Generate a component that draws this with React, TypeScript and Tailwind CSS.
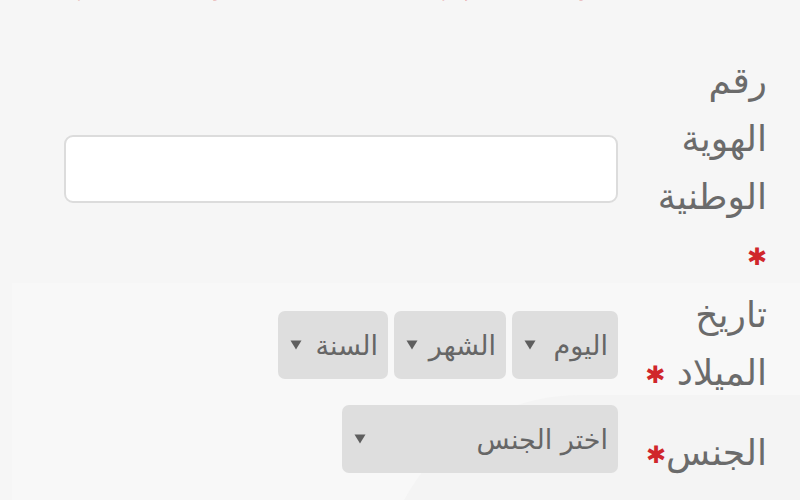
import React from "react";

const Arrow = () => (
  <svg width="12" height="10" viewBox="0 0 12 10" className="shrink-0">
    <path d="M0.5 0.5 H11.5 L6 9.5 Z" fill="#5e5e5e" />
  </svg>
);

const Star = () => (
  <span className="text-[#d0262b] text-[24px] align-middle">✱</span>
);

function Select({ label, w }: { label: string; w: string }) {
  return (
    <div
      className={`${w} h-[68px] rounded-[7px] bg-[#dedede] flex items-center justify-between pr-[10px] pl-[12px] text-[27px] text-[#666666]`}
    >
      <span className="leading-none">{label}</span>
      <Arrow />
    </div>
  );
}

export default function App() {
  return (
    <div
      dir="rtl"
      className="relative w-[800px] h-[500px] overflow-hidden bg-[#f6f6f6]"
      style={{ fontFamily: '"DejaVu Sans", "Noto Sans", sans-serif' }}
    >
      <div className="absolute left-[12px] right-0 top-[283px] bottom-0 bg-[#f8f8f8]" />
      <div className="absolute left-[380px] top-[395px] w-[700px] h-[400px] rounded-full bg-[#f4f4f4]" />

      <div className="relative">
        <div className="h-[10px] overflow-hidden">
          <p className="-mt-[33px] pr-[100px] pl-[235px] text-[26px] leading-[36px] text-[#d0262b] whitespace-nowrap">
            جميع الحقول المشار إليها بعلامة النجمة مطلوبة يجب تعبئتها
          </p>
        </div>

        <div className="pt-[42px] pr-[33px] pl-[64px] flex flex-col">
          <div className="flex items-center gap-[29px]">
            <div className="w-[120px] shrink-0 text-[36px] leading-[58px] text-[#6b6b6b] whitespace-nowrap">
              <div>رقم</div>
              <div>الهوية</div>
              <div>الوطنية</div>
              <div>
                <Star />
              </div>
            </div>
            <div className="flex-1 h-[68px] rounded-[9px] border-2 border-[#dcdcdc] bg-white" />
          </div>

          <div className="flex items-center gap-[29px]">
            <div className="w-[120px] shrink-0 text-[36px] leading-[58px] text-[#6b6b6b] whitespace-nowrap">
              <div>تاريخ</div>
              <div>
                الميلاد <Star />
              </div>
            </div>
            <div className="flex gap-[6px]">
              <Select label="اليوم" w="w-[106px]" />
              <Select label="الشهر" w="w-[112px]" />
              <Select label="السنة" w="w-[110px]" />
            </div>
          </div>

          <div className="flex items-start gap-[29px] pt-[1px]">
            <div className="w-[120px] shrink-0 pt-[19px] text-[36px] leading-[58px] text-[#6b6b6b] whitespace-nowrap">
              الجنس<Star />
            </div>
            <Select label="اختر الجنس" w="w-[276px]" />
          </div>
        </div>
      </div>
    </div>
  );
}
